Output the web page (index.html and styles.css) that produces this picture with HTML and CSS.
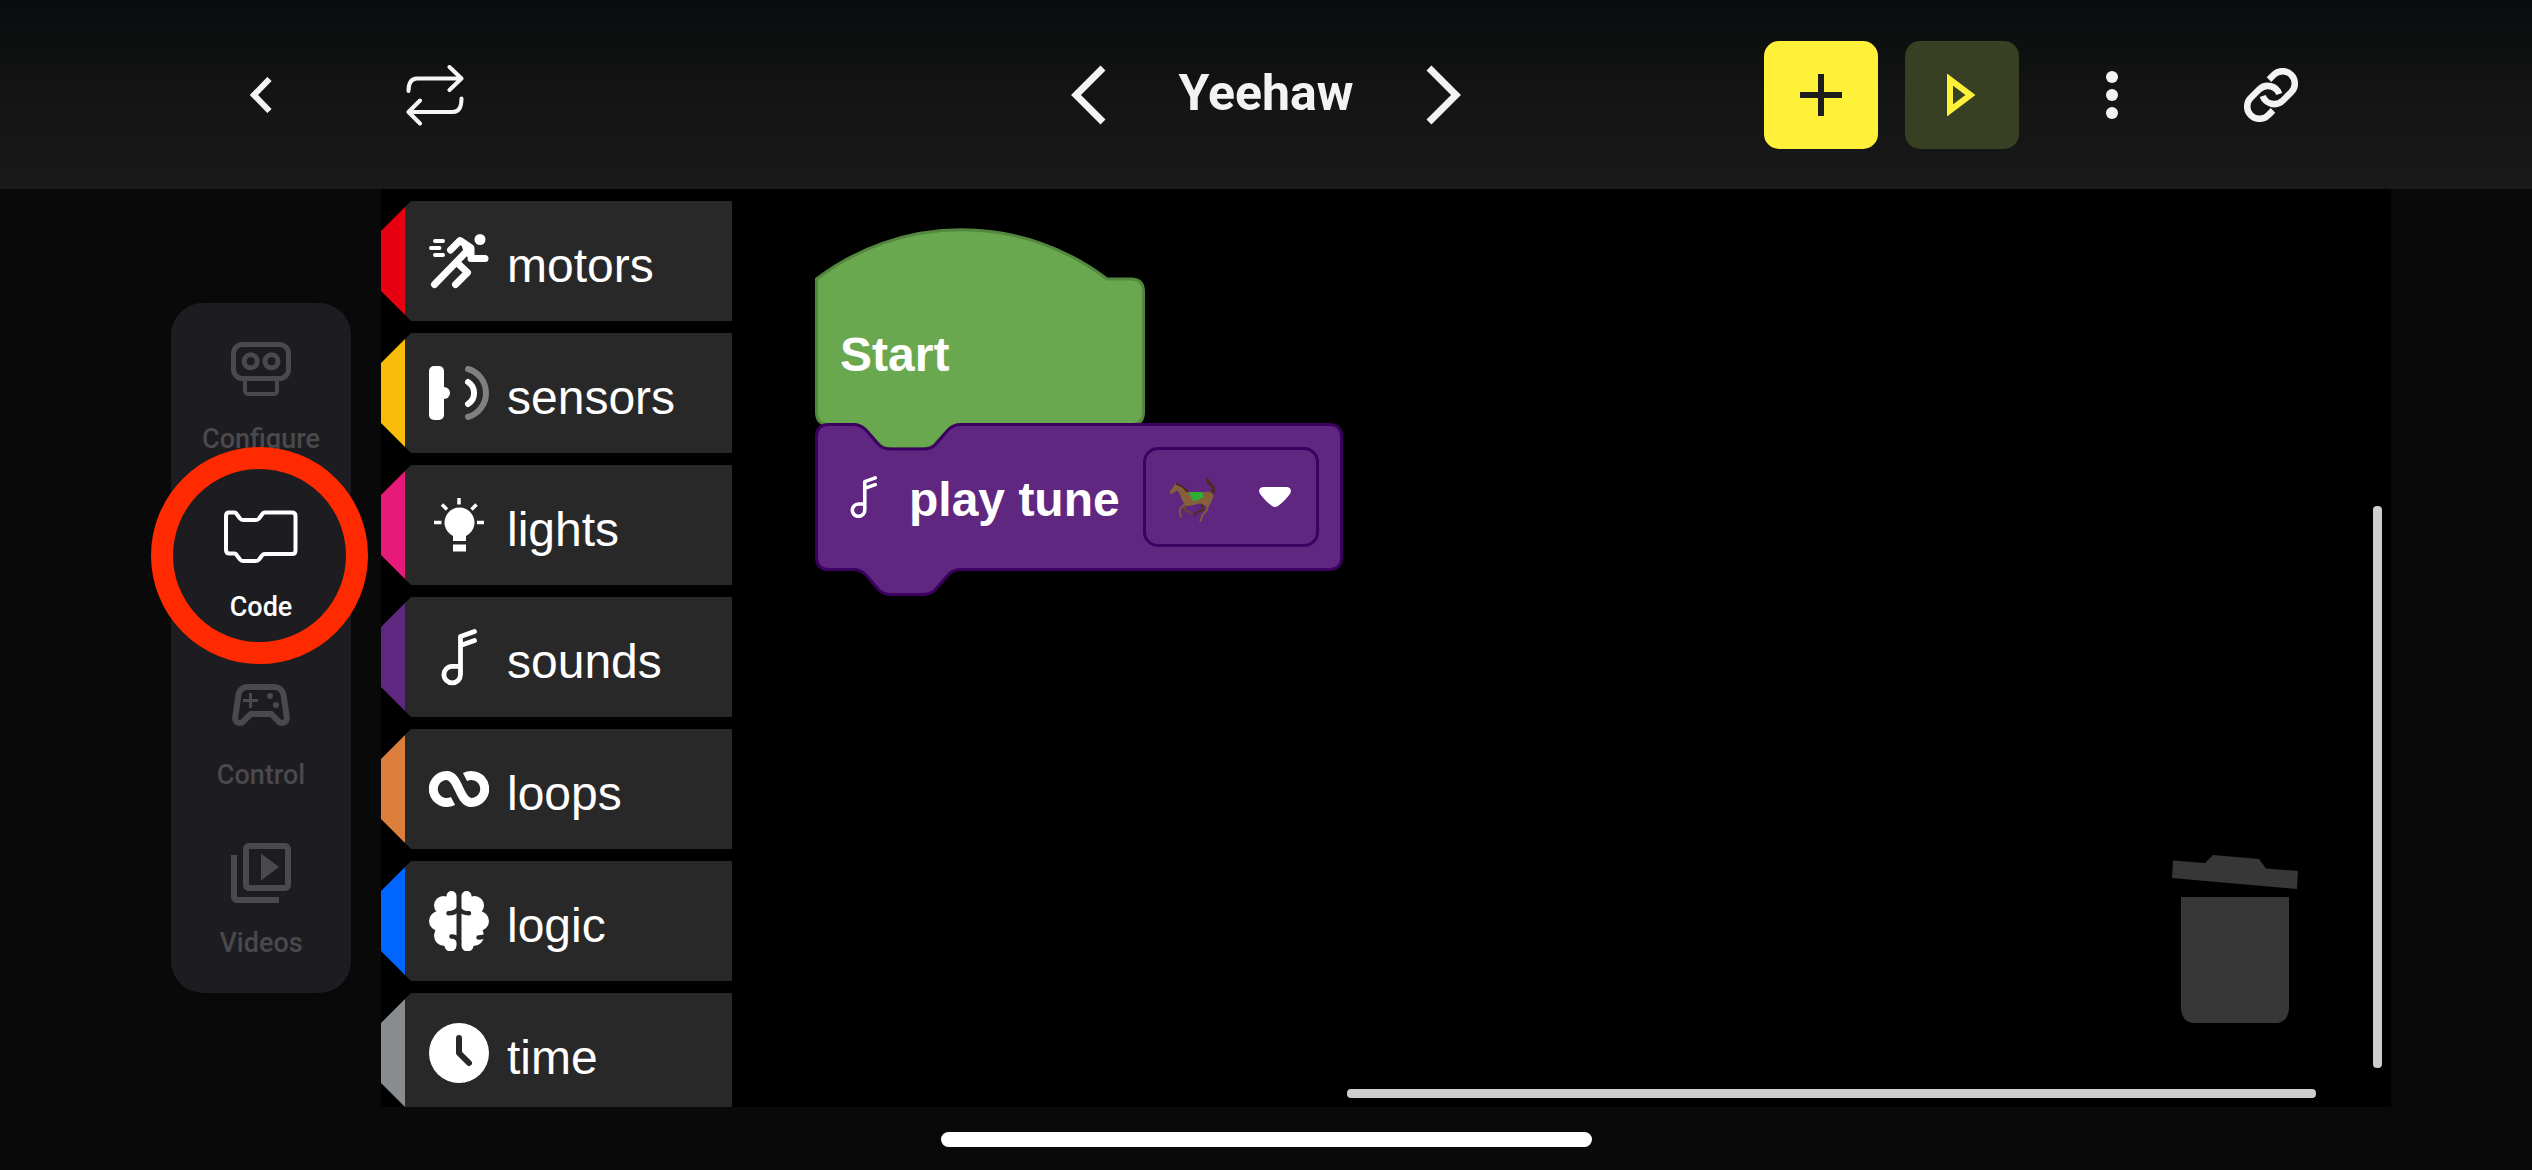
FILE: index.html
```html
<!DOCTYPE html>
<html lang="en">
<head>
<meta charset="utf-8">
<meta name="viewport" content="width=device-width, initial-scale=1">
<title>Yeehaw</title>
<link rel="stylesheet" href="styles.css">
</head>
<body>
<header class="topbar">
  <div class="topbar-left">
    <button class="icon-btn" type="button" aria-label="Back">
      <svg width="22" height="36" viewBox="0 0 22 36"><path d="M19.500 2 4 18l15.500 16" fill="none" stroke="#f3f3f3" stroke-width="6"/></svg>
    </button>
    <button class="icon-btn" type="button" aria-label="Switch">
      <svg width="58" height="62" viewBox="-1 -1 58 62"><g fill="none" stroke="#f6f6f6" stroke-width="4" stroke-linecap="round" stroke-linejoin="round"><path d="M1.500 26C1.500 18 4 13.500 10 13.500H54M42.500 2l12 11.500-12 11.500M54.500 33.500C54.500 42 52 47 46 47H2M13 35.500 1.500 47 13 58.500"/></g></svg>
    </button>
  </div>
  <div class="topbar-title">
    <button class="plain-btn" type="button" aria-label="Previous program">
      <svg width="35" height="60" viewBox="0 0 35 60"><path d="M32 3 5 30l27 27" fill="none" stroke="#f3f3f3" stroke-width="7"/></svg>
    </button>
    <h1>Yeehaw</h1>
    <button class="plain-btn" type="button" aria-label="Next program">
      <svg width="35" height="60" viewBox="0 0 35 60"><path d="M3 3 30 30 3 57" fill="none" stroke="#f3f3f3" stroke-width="7"/></svg>
    </button>
  </div>
  <div class="topbar-right">
    <button class="action add" type="button" aria-label="Add">
      <svg width="42" height="42" viewBox="0 0 42 42"><path d="M21 0v42M0 21h42" stroke="#1d1d1d" stroke-width="6"/></svg>
    </button>
    <button class="action play" type="button" aria-label="Run">
      <svg width="42" height="42" viewBox="0 0 42 42"><path d="M8 5.500v31L28.500 21z" transform="translate(1 0)" fill="none" stroke="#fff03a" stroke-width="6"/></svg>
    </button>
    <button class="icon-btn more" type="button" aria-label="More">
      <svg width="12" height="48" viewBox="0 0 12 48" fill="#f3f3f3"><circle cx="6" cy="6" r="6"/><circle cx="6" cy="24" r="6"/><circle cx="6" cy="42" r="6"/></svg>
    </button>
    <button class="icon-btn link" type="button" aria-label="Connect">
      <svg width="54" height="54" viewBox="0 0 54 54"><g fill="none" stroke="#f3f3f3" stroke-width="6.500"><path id="ring" d="M25 11.600 29.800 6.800A12.300 12.300 0 0 1 47.200 24.200L38.700 32.700A12.300 12.300 0 0 1 18.700 28"/><use href="#ring" transform="rotate(180 27 27)"/></g></svg>
    </button>
  </div>
</header>

<main class="main">
  <nav class="modes" aria-label="Modes">
    <a class="mode" href="#configure">
      <svg width="72" height="72" viewBox="-6 -9 72 72"><g fill="none" stroke="currentColor" stroke-width="5"><rect x="2.500" y="2.500" width="55" height="34" rx="9"/><circle cx="19.700" cy="19.300" r="6.500"/><circle cx="40.500" cy="19.300" r="6.500"/><path stroke-width="4" d="M14 38v11a3 3 0 0 0 3 3h26a3 3 0 0 0 3-3V38"/></g></svg>
      <span>Configure</span>
    </a>
    <a class="mode active" href="#code" aria-current="page">
      <svg width="74" height="72" viewBox="0 -9 74 72"><path d="M5 2.500h5q2 0 3 2l3 4q1 1.500 3 1.500h13q2 0 3-1.500l3-4q1-2 3-2h27q3.500 0 3.500 3.500v34.500q0 3.500-3.500 3.500H41q-2 0-3 1.500l-3 4q-1 1.500-3 1.500H19q-2 0-3-1.500l-3-4q-1-2-3-2H5.500q-3.500 0-3.500-3.500V6Q2 2.500 5 2.500z" fill="none" stroke="currentColor" stroke-width="4" stroke-linejoin="round"/></svg>
      <span>Code</span>
    </a>
    <a class="mode" href="#control">
      <svg width="72" height="72" viewBox="0 0 24 24" fill="currentColor"><path d="M21.580 16.090l-1.090-7.660A3.996 3.996 0 0 0 16.530 5H7.470C5.480 5 3.790 6.460 3.510 8.430l-1.090 7.660a2.545 2.545 0 0 0 2.520 2.910c.68 0 1.320-.27 1.800-.75L9 16h6l2.250 2.250c.48.48 1.130.75 1.800.75 1.560 0 2.750-1.370 2.530-2.910zm-2.100.72a.54.54 0 0 1-.42.19c-.15 0-.29-.06-.39-.16L15.830 14H8.170l-2.840 2.840c-.1.100-.24.160-.39.160a.54.54 0 0 1-.42-.19.55.55 0 0 1-.13-.44l1.090-7.660C5.630 7.740 6.480 7 7.470 7h9.060c.99 0 1.840.74 1.980 1.720l1.090 7.660c.03.190-.05.340-.12.430z"/><path d="M9 8H8v2H6v1h2v2h1v-2h2v-1H9z"/><circle cx="17" cy="12" r="1"/><circle cx="15" cy="9" r="1"/></svg>
      <span>Control</span>
    </a>
    <a class="mode" href="#videos">
      <svg width="72" height="72" viewBox="0 0 24 24" fill="currentColor"><path d="M4 6H2v14c0 1.100.9 2 2 2h14v-2H4V6zm16-4H8c-1.100 0-2 .9-2 2v12c0 1.100.9 2 2 2h12c1.100 0 2-.9 2-2V4c0-1.100-.9-2-2-2zm0 14H8V4h12v12zM12 5.500v9l6-4.500-6-4.500z"/></svg>
      <span>Videos</span>
    </a>
  </nav>

  <div class="palette" role="group" aria-label="Block categories">
    <button class="category motors" type="button">
      <svg width="60" height="60" viewBox="0 -3 60 60"><g fill="none" stroke="#fff" stroke-width="7" stroke-linecap="round" stroke-linejoin="round"><path stroke-width="4" d="M6 7h8M2 14h8.500M6 21h8"/><path d="M21.500 16 31 6.500l11 7.500v10.500h14M5.500 50.500 40 15M26.500 50.500 38.500 38.500 30 30.500M36 11l3 8"/></g><circle cx="51" cy="5.500" r="5.500" fill="#fff"/></svg>
      <span>motors</span>
    </button>
    <button class="category sensors" type="button">
      <svg width="60" height="60" viewBox="0 -3 60 60"><rect width="15" height="54" rx="5" fill="#fff"/><circle cx="15" cy="27" r="6" fill="#fff"/><g fill="none" stroke-width="6" stroke-linecap="round"><path stroke="#fff" d="M39 16a13 13 0 0 1 0 22"/><path stroke="#808080" d="M39 3a25 25 0 0 1 0 48"/></g></svg>
      <span>sensors</span>
    </button>
    <button class="category lights" type="button">
      <svg width="60" height="60" viewBox="0 -3 60 60"><path d="M24 43v-5a15 15 0 1 1 13 0v5zM24 46.500h13V53.500H24z" fill="#fff"/><path d="M30 0v6.500M5 24.500h7.500M48 24.500h7M13 6.500l5 5M47.500 6.500l-5 5" stroke="#fff" stroke-width="3.500"/></svg>
      <span>lights</span>
    </button>
    <button class="category sounds" type="button">
      <svg width="60" height="60" viewBox="0 -3 60 60"><g id="note" fill="none" stroke="#fff" stroke-width="4.800" stroke-linecap="round" stroke-linejoin="round"><path d="M31.500 36.300H23a8.300 8.300 0 1 0 8.500 8.300V6.500L45.500 1.500M31.500 15.500l14-5"/></g></svg>
      <span>sounds</span>
    </button>
    <button class="category loops" type="button">
      <svg width="60" height="60" viewBox="0 -3 60 60"><path d="M24 39A13.500 13.500 0 1 1 17.700 13.500C30 13.500 30 40.500 42.300 40.500A13.500 13.500 0 1 0 36 15" fill="none" stroke="#fff" stroke-width="9"/></svg>
      <span>loops</span>
    </button>
    <button class="category logic" type="button">
      <svg width="60" height="60" viewBox="0 0 60 60"><g fill="#fff"><g id="lobe"><path d="M17.500 5a5 5 0 0 1 10 0v49.500a6 6 0 0 1-12 0L13 20z"/><circle cx="14.500" cy="14.500" r="9.500"/><circle cx="10" cy="30" r="10"/><circle cx="15.500" cy="44.500" r="10.500"/></g><use href="#lobe" transform="matrix(-1 0 0 1 60 0)"/></g><g fill="none" stroke="#282828" stroke-width="4.500" stroke-linecap="round"><path d="M19.500 22.300q7 0 10-4.800 3.500 4.800 10.500 4.800M22.500 45.500q5-.5 7.500 5M49.500 46.500q7 0 10-4.500"/></g></svg>
      <span>logic</span>
    </button>
    <button class="category time" type="button">
      <svg width="60" height="60" viewBox="0 0 60 60"><circle cx="30" cy="30" r="30" fill="#fff"/><path d="M30 15v15l10 10" fill="none" stroke="#282828" stroke-width="6" stroke-linecap="round" stroke-linejoin="round"/></svg>
      <span>time</span>
    </button>
  </div>

  <section class="workspace" aria-label="Workspace">
    <div class="stack">
      <div class="block start">
        <svg class="shape" width="330" height="222" viewBox="0 0 330 222"><path d="M1.500 51A239 239 0 0 1 292 51H316Q328.500 51 328.500 63.500V184Q328.500 196.500 316 196.500H146C140 196.500 136 199 133 202L120 216C117 219 114 220.500 108 220.500H76C70 220.500 67 219 64 216L51 202C48 199 44 196.500 38 196.500H14Q1.500 196.500 1.500 184z" fill="#6aa84f" stroke="#55883f" stroke-width="3"/></svg>
        <span>Start</span>
      </div>
      <div class="block tune">
        <svg class="shape" width="528" height="174" viewBox="0 0 528 174"><path d="M1.500 14Q1.500 1.500 14 1.500H38C44 1.500 48 4 51 7L64 22C67 25 70 26 76 26H108C114 26 117 25 120 22L133 7C136 4 140 1.500 146 1.500H514Q526.500 1.500 526.500 14V134Q526.500 146.500 514 146.500H146C140 146.500 136 149 133 152L120 167C117 170 114 171.500 108 171.500H76C70 171.500 67 170 64 167L51 152C48 149 44 146.500 38 146.500H14Q1.500 146.500 1.500 134z" fill="#5f2780" stroke="#3c0061" stroke-width="3"/></svg>
        <svg class="note" width="28" height="42" viewBox="12 -1 37 56"><use href="#note"/></svg>
        <label for="tune">play tune</label>
        <div class="picker">
          <select id="tune"><option value="horse" aria-label="Horse"></option></select>
          <svg class="horse" width="48" height="44" viewBox="0 0 48 44"><g fill="none" stroke-linecap="round" stroke-linejoin="round"><path d="M38.500 1.500Q39 6 43 7.500 47 12 42 15.500" stroke="#4d2b22" stroke-width="3"/><path d="M33 24 33.500 32 27 34.500 26 37.500" stroke="#45301e" stroke-width="2"/><path d="M19 25 15 31 22.500 36" stroke="#6a4a2c" stroke-width="2"/><path d="M17 25 11.500 30.500 10.500 34.500 12 38.500" stroke="#80583a" stroke-width="2"/><path d="M39 24 38 32 33.500 37 31.500 43" stroke="#80583a" stroke-width="2.200"/></g><path d="M.5 15Q1 12 4 9.500L6.500 4.500 8 7Q13 8 20 14.500 32 15 40 13.500 45.500 15 44 19.500 43 24 38.500 30 33 24 28 26 22 28 17 28 12.500 23 11.500 18 10 13.500 8 12.500L2.500 16z" fill="#86603a"/><path d="M6.500 5Q16 7 20 14.500L17 14Q13 8 7 7z" fill="#4d2b22"/><path d="M19.500 14H33.500l1 5.500-10 4z" fill="#2fad35"/></svg>
          <svg class="caret" width="32" height="20" viewBox="0 0 32 20"><path d="M4 0h24q5 1 3.500 6Q27 13 19 19q-3 2-6 0Q5 13 .5 6-1 1 4 0z" fill="#fff"/></svg>
        </div>
      </div>
    </div>
    <svg class="trash" width="128" height="170" viewBox="0 0 128 170" fill="#373737" role="img" aria-label="Trash"><path d="M2 7.500 34 10l8-8 46 4 7 9.500 32 2.500-1 18L1 25zM10 44h108v112q-1 12-11 14H21q-10-2-11-14z"/></svg>
    <div class="scroll vertical"></div>
    <div class="scroll horizontal"></div>
  </section>
</main>
<footer class="home"><div class="home-bar"></div></footer>
</body>
</html>
```
FILE: styles.css
```css
*, *::before, *::after { box-sizing: border-box; }

body {
  margin: 0;
  height: 100vh;
  display: flex;
  flex-direction: column;
  background: #090909;
  color: #fff;
  font-family: "Liberation Sans", Arial, sans-serif;
  overflow: hidden;
}

button {
  border: 0;
  padding: 0;
  margin: 0;
  background: none;
  color: inherit;
  font: inherit;
}

svg { display: block; flex: none; }

/* Top bar */
.topbar {
  flex: none;
  display: grid;
  grid-template-columns: 1fr auto 1fr;
  align-items: center;
  height: 189px;
  padding: 0 216px;
  background: linear-gradient(#0a0b0d, #131413 50%, #191919);
}

.topbar-left, .topbar-title, .topbar-right {
  display: flex;
  align-items: center;
}
.topbar-left { gap: 84px; }
.topbar-title { gap: 73px; }
.topbar-right { justify-content: flex-end; }

.topbar h1 {
  margin: 0;
  padding-bottom: 4px;
  font: 700 50px/56px Roboto, sans-serif;
  color: #f3f3f3;
}

.icon-btn {
  display: flex;
  align-items: center;
  justify-content: center;
  width: 90px;
  height: 90px;
}

.action {
  display: flex;
  align-items: center;
  justify-content: center;
  width: 114px;
  height: 108px;
  border-radius: 15px;
}
.add { background: #fff03a; }
.play { margin-left: 27px; background: #384023; }
.more { margin-left: 48px; }
.link { margin-left: 69px; }

/* Body */
.main {
  flex: 1;
  min-height: 0;
  display: flex;
  padding: 0 141px 0 171px;
}

.modes {
  position: relative;
  z-index: 1;
  flex: none;
  align-self: flex-start;
  width: 180px;
  margin: 114px 30px 0 0;
  padding: 9px 0;
  border-radius: 32px;
  background: #1d1c20;
}

.mode {
  position: relative;
  display: flex;
  flex-direction: column;
  align-items: center;
  gap: 18px;
  height: 168px;
  padding-top: 21px;
  color: #4a494d;
  font: 500 27px/32px Roboto, sans-serif;
  text-decoration: none;
}
.mode.active { z-index: 1; color: #fff; }
.mode.active::after {
  content: "";
  position: absolute;
  left: -20px;
  top: -33px;
  width: 217px;
  height: 217px;
  border: 22px solid #ff2a00;
  border-radius: 50%;
}

/* Block categories */
.palette {
  flex: none;
  display: flex;
  flex-direction: column;
  gap: 12px;
  width: 351px;
  padding-top: 12px;
  background: #000;
  overflow: hidden;
}

.category {
  flex: none;
  display: flex;
  align-items: center;
  gap: 18px;
  height: 120px;
  padding-left: 48px;
  background: linear-gradient(90deg, var(--tone) 24px, #282828 24px);
  clip-path: polygon(0 30px, 30px 0, 100% 0, 100% 100%, 30px 100%, 0 90px);
  font-size: 48px;
  line-height: 56px;
}
.category span { padding-top: 10px; }

.motors { --tone: #e60012; }
.sensors { --tone: #f9bc0a; }
.lights { --tone: #e61a78; }
.sounds { --tone: #5f2780; }
.loops { --tone: #dc7f3c; }
.logic { --tone: #0066ff; }
.time { --tone: #888c8e; }

/* Workspace */
.workspace {
  position: relative;
  flex: 1;
  background: #000;
}

.stack {
  position: absolute;
  left: 83px;
  top: 39px;
}

.block {
  position: relative;
  display: flex;
  align-items: center;
  font-size: 48px;
  font-weight: 700;
  line-height: 56px;
}
.shape { position: absolute; left: 0; top: 0; }

.start { height: 195px; padding: 58px 25px 0; }
.start span { position: relative; }

.tune { width: 528px; height: 148px; padding: 0 24px 0 35px; }
.tune .note { position: relative; }
.tune label { position: relative; padding-top: 6px; margin-left: 31px; }

.picker {
  position: relative;
  width: 176px;
  height: 100px;
  margin-left: auto;
}
.picker select {
  appearance: none;
  width: 100%;
  height: 100%;
  border: 3px solid #3c0061;
  border-radius: 15px;
  background: #5f2780;
}
.horse, .caret { position: absolute; pointer-events: none; }
.horse { left: 26px; top: 31px; }
.caret { right: 28px; top: 40px; }

.trash { position: absolute; right: 92px; bottom: 84px; }

.scroll {
  position: absolute;
  border-radius: 4px;
  background: #cecece;
}
.vertical { right: 9px; top: 317px; bottom: 39px; width: 9px; }
.horizontal { left: 615px; right: 75px; bottom: 9px; height: 9px; }

.home {
  flex: none;
  display: flex;
  justify-content: center;
  height: 63px;
  padding-top: 25px;
}
.home-bar {
  width: 651px;
  height: 15px;
  border-radius: 8px;
  background: #fff;
}
```
